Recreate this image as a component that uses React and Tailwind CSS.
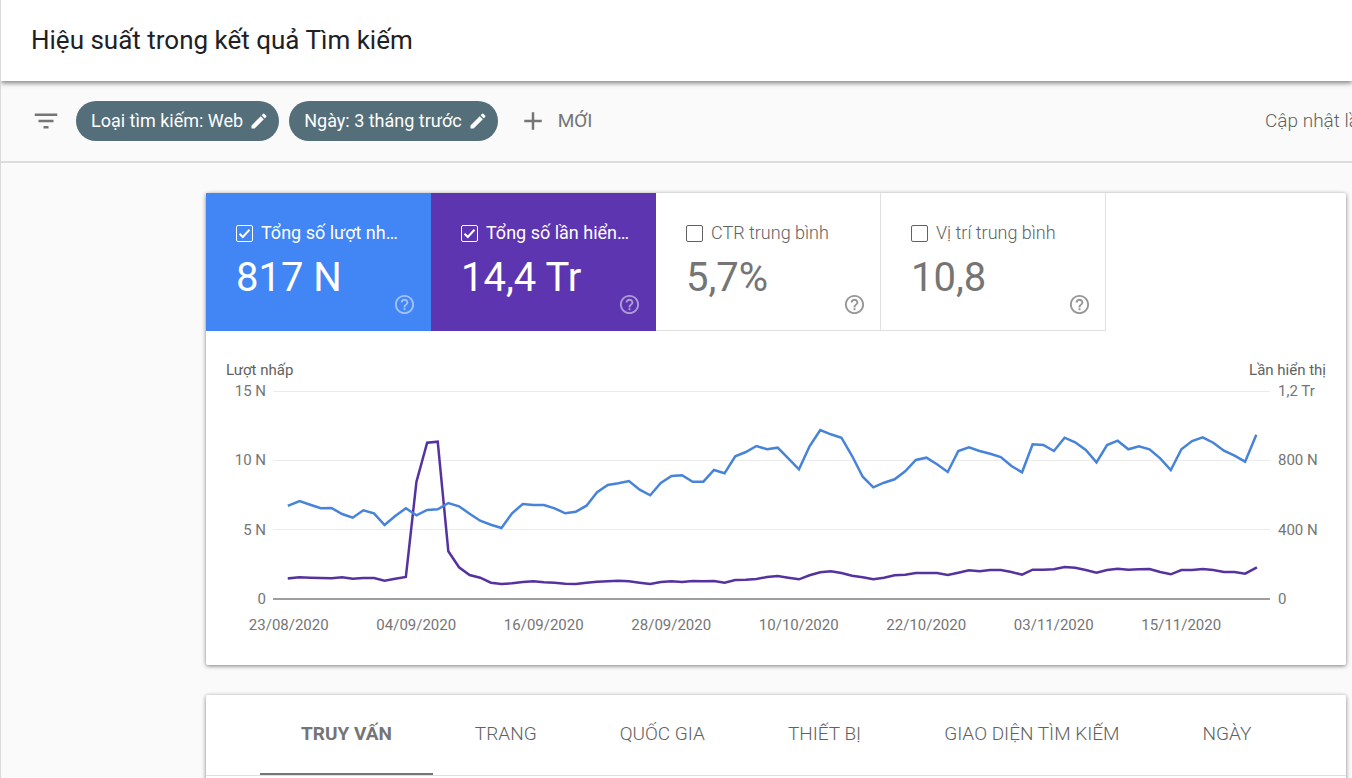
import React, { useState } from "react";
import { MdFilterList, MdEdit, MdAdd, MdHelpOutline } from "react-icons/md";

// Heights above the zero line, one per day, on a 208 unit tall plot
const CLICKS = [
  93.7, 98, 94.3, 90.7, 91, 85, 81.3, 88.7, 85.7, 74, 83, 90.7, 83.7, 89, 89.7, 96,
  92.7, 85.3, 78.3, 74.3, 71, 85.7, 95, 94, 94, 90.7, 85.7, 87.3, 93.3, 106.7, 114,
  115.7, 118, 109.3, 103.7, 116, 123, 123.7, 117.3, 117.3, 129, 125.7, 142.7, 147,
  153, 149.7, 151.3, 140.7, 129.7, 152.7, 169, 164.7, 161.3, 143, 122.3, 111.7,
  116.3, 119.7, 127.7, 139, 141.3, 134.7, 127, 148, 151.7, 148, 145.3, 142, 133,
  126.7, 154.7, 154, 148, 161.3, 156.7, 149, 136.7, 154, 158.3, 149.7, 152.7, 149.7,
  140.7, 129, 149.7, 158, 161.7, 156.3, 148.3, 143.3, 137.3, 163,
];

const IMPRESSIONS = [
  20.7, 21.7, 21.3, 21, 20.7, 21.7, 20.3, 21, 21, 18.3, 20.3, 22, 117.3, 156.3, 157.3,
  47.7, 31.7, 24, 21.3, 16.3, 15, 15.7, 17, 17.7, 16.7, 16.3, 15.3, 15, 16.3, 17.3,
  17.7, 18.3, 17.7, 16.3, 15, 17, 17.7, 17, 18, 17.7, 18, 16.3, 19, 19.3, 20, 22, 23,
  21.3, 19.7, 23.7, 26.7, 27.7, 26, 23.3, 21.7, 19.7, 21.3, 23.7, 24.3, 26, 26, 26,
  24, 26.3, 28.7, 27.7, 29, 29, 27, 24.3, 29.3, 29.3, 29.7, 32, 31.3, 29, 26.3, 29,
  30.3, 29.3, 29.7, 30, 27, 24.7, 29, 29, 30, 29, 27, 27, 25.3, 31,
];

const DATES = [
  "23/08/2020",
  "04/09/2020",
  "16/09/2020",
  "28/09/2020",
  "10/10/2020",
  "22/10/2020",
  "03/11/2020",
  "15/11/2020",
];

const METRICS = [
  { id: "clicks", label: "Tổng số lượt nh…", value: "817 N", active: "bg-[#4285f4]" },
  { id: "impressions", label: "Tổng số lần hiển…", value: "14,4 Tr", active: "bg-[#5e35b1]" },
  { id: "ctr", label: "CTR trung bình", value: "5,7%", active: "bg-[#00897b]" },
  { id: "position", label: "Vị trí trung bình", value: "10,8", active: "bg-[#e8710a]" },
];

const TABS = ["TRUY VẤN", "TRANG", "QUỐC GIA", "THIẾT BỊ", "GIAO DIỆN TÌM KIẾM", "NGÀY"];

const toPoints = (values) =>
  values.map((v, i) => `${(16 + i * 10.635).toFixed(1)},${(208 - v).toFixed(1)}`).join(" ");

const Chip = ({ children }) => (
  <button className="flex h-10 items-center gap-[6px] rounded-full bg-[#546e7a] pl-[15px] pr-[10px] text-lg text-white whitespace-nowrap">
    {children}
    <MdEdit className="size-5" />
  </button>
);

const MetricCard = ({ metric, checked, onToggle }) => (
  <div
    className={`flex h-[138px] w-[225px] flex-col pl-[30px] pt-7 ${
      checked
        ? `${metric.active} text-white`
        : "border-b border-r border-[#e0e0e0] text-[#757575]"
    }`}
  >
    <label
      className={`flex items-center gap-2 text-lg leading-6 whitespace-nowrap ${
        checked ? "" : "font-light text-[#616161]"
      }`}
    >
      <span className="relative flex">
        <input
          type="checkbox"
          checked={checked}
          onChange={onToggle}
          className="size-[17px] appearance-none rounded-xs border border-current"
        />
        {checked && (
          <svg viewBox="0 0 17 17" className="pointer-events-none absolute inset-0 size-[17px]">
            <path d="M3.5 8.8l3.3 3.2 6.7-7.2" fill="none" stroke="currentColor" strokeWidth="2" />
          </svg>
        )}
      </span>
      {metric.label}
    </label>
    <p className="mt-[9px] text-[40px] leading-[48px]">{metric.value}</p>
    <button
      aria-label={`Trợ giúp: ${metric.label}`}
      className={`-mt-[9px] self-end ${checked ? "mr-[15px] opacity-50" : "mr-[14px] opacity-75"}`}
    >
      <MdHelpOutline className="size-[23px]" />
    </button>
  </div>
);

const Axis = ({ labels, className }) => (
  <div className={`mt-px flex h-[228px] flex-col justify-between text-[15px] leading-5 text-[#757575] ${className}`}>
    {labels.map((label) => (
      <span key={label}>{label}</span>
    ))}
  </div>
);

const Chart = ({ visible }) => (
  <div className="px-5 pb-[30px] pt-[29px]">
    <div className="flex justify-between text-[15px] leading-5 text-[#616161]">
      <span>Lượt nhấp</span>
      <span>Lần hiển thị</span>
    </div>
    <div className="flex">
      <Axis labels={["15 N", "10 N", "5 N", "0"]} className="w-10 text-right" />
      <div className="ml-[7px] mr-2 min-w-0 flex-1 pt-[11px]">
        <svg
          viewBox="0 0 998 210"
          preserveAspectRatio="none"
          className="block h-[210px] w-full"
          role="img"
          aria-label="Lượt nhấp và lần hiển thị"
        >
          <path d="M0 .5H998M0 69.5H998M0 138.5H998" stroke="#ebebeb" />
          <path d="M0 208H998" stroke="#9e9e9e" strokeWidth="2" />
          {visible.impressions && (
            <polyline
              points={toPoints(IMPRESSIONS)}
              fill="none"
              stroke="#5632a0"
              strokeWidth="2.5"
              strokeLinecap="square"
            />
          )}
          {visible.clicks && (
            <polyline
              points={toPoints(CLICKS)}
              fill="none"
              stroke="#4683d9"
              strokeWidth="2.5"
              strokeLinecap="square"
            />
          )}
        </svg>
      </div>
      <Axis labels={["1,2 Tr", "800 N", "400 N", "0"]} className="w-12" />
    </div>
    <div className="-ml-px mr-[81px] mt-[6px] grid grid-cols-8 text-center text-[15px] leading-5 text-[#757575]">
      {DATES.map((date) => (
        <span key={date}>{date}</span>
      ))}
    </div>
  </div>
);

const App = () => {
  const [visible, setVisible] = useState({ clicks: true, impressions: true });
  const [tab, setTab] = useState(TABS[0]);

  const toggle = (id) => setVisible({ ...visible, [id]: !visible[id] });

  return (
    <div className="h-screen overflow-hidden border-l border-[#dadada] bg-[#fafafa] font-[Roboto,sans-serif]">
      <header className="relative bg-white px-[30px] py-5 shadow-[0_2px_5px_rgba(0,0,0,0.5)]">
        <h1 className="text-[26px] leading-[41px] text-[#202124]">Hiệu suất trong kết quả Tìm kiếm</h1>
      </header>

      <div className="flex items-center border-b-2 border-[#dcdcdc] py-5 pl-[30px]">
        <button aria-label="Bộ lọc" className="text-[#757575]">
          <MdFilterList className="size-[30px]" />
        </button>
        <div className="ml-[15px] flex gap-[10px]">
          <Chip>Loại tìm kiếm: Web</Chip>
          <Chip>Ngày: 3 tháng trước</Chip>
        </div>
        <button className="ml-5 flex items-center gap-[10px] text-[19px] text-[#757575]">
          <MdAdd className="size-[30px]" />
          MỚI
        </button>
        <p className="ml-auto w-[87px] overflow-hidden text-[19px] leading-7 font-light whitespace-nowrap text-[#616161]">
          Cập nhật lần cuối
        </p>
      </div>

      <main className="flex flex-col gap-[30px] pb-[30px] pl-[205px] pr-[6px] pt-[30px]">
        <section className="rounded-xs bg-white shadow-[0_1px_4px_rgba(0,0,0,0.5)]">
          <div className="flex">
            {METRICS.map((metric) => (
              <MetricCard
                key={metric.id}
                metric={metric}
                checked={!!visible[metric.id]}
                onToggle={() => toggle(metric.id)}
              />
            ))}
          </div>
          <Chart visible={visible} />
        </section>

        <section className="min-h-40 rounded-xs bg-white shadow-[0_1px_4px_rgba(0,0,0,0.5)]">
          <div role="tablist" className="flex gap-px border-b border-[#e0e0e0] pl-[54px]">
            {TABS.map((name) => (
              <button
                key={name}
                role="tab"
                aria-selected={name === tab}
                onClick={() => setTab(name)}
                className={`h-20 border-b-2 px-[41px] text-[19px] whitespace-nowrap ${
                  name === tab
                    ? "border-[#757575] font-bold text-[#757575]"
                    : "border-transparent font-light text-[#616161]"
                }`}
              >
                {name}
              </button>
            ))}
          </div>
        </section>
      </main>
    </div>
  );
};

export default App;
